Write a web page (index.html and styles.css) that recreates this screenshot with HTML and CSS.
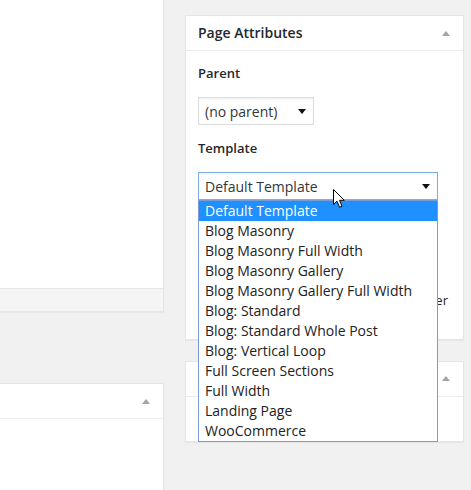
FILE: index.html
```html
<!DOCTYPE html>
<html lang="en">
<head>
    <meta charset="UTF-8">
    <title>Page Attributes</title>
    <link rel="stylesheet" href="styles.css">
</head>
<body>
    <div class="screen">
        <div class="col-main">
            <div class="box box-editor">
                <div class="editor-area"></div>
                <div class="status-bar"></div>
            </div>
            <div class="box box-lower">
                <div class="box-head"><span class="toggle"></span></div>
                <div class="box-body lower-body"></div>
            </div>
        </div>

        <div class="col-side">
            <div class="box">
                <div class="box-head">
                    <h2>Page Attributes</h2>
                    <span class="toggle"></span>
                </div>
                <div class="box-body attrs">
                    <p class="field-label first">Parent</p>
                    <div class="select select-parent">(no parent)<span class="caret"></span></div>

                    <p class="field-label">Template</p>
                    <div class="template-wrap">
                        <div class="select select-template">Default Template<span class="caret"></span></div>
                        <ul class="options">
                            <li class="selected">Default Template</li>
                            <li>Blog Masonry</li>
                            <li>Blog Masonry Full Width</li>
                            <li>Blog Masonry Gallery</li>
                            <li>Blog Masonry Gallery Full Width</li>
                            <li>Blog: Standard</li>
                            <li>Blog: Standard Whole Post</li>
                            <li>Blog: Vertical Loop</li>
                            <li>Full Screen Sections</li>
                            <li>Full Width</li>
                            <li>Landing Page</li>
                            <li>WooCommerce</li>
                        </ul>
                        <svg class="cursor" width="13" height="20" viewBox="0 0 13 20">
                            <path d="M0.5 0.5 L0.5 15.5 L4 12.2 L6.6 18.3 L9 17.3 L6.5 11.3 L11.3 11.3 Z" fill="#fff" stroke="#000" stroke-width="1" stroke-linejoin="miter"/>
                        </svg>
                    </div>

                    <p class="field-label">Order</p>
                    <input class="order-input" type="text" value="0">
                    <p class="help">Need help? Use the Help tab in the upper right of your screen.</p>
                </div>
            </div>

            <div class="box box-featured">
                <div class="box-head"><span class="toggle"></span></div>
                <div class="box-body featured-body">
                    <p>Set featured image</p>
                </div>
            </div>
        </div>
    </div>
</body>
</html>
```

FILE: styles.css
```css
body {
    margin: 0;
    height: 490px;
    overflow: hidden;
    background: #f1f1f1;
    font-family: "Open Sans", sans-serif;
    font-size: 13px;
    color: #23282d;
}
.screen {
    display: flex;
    gap: 21px;
}
.col-main {
    width: 164px;
}
.col-side {
    width: 279px;
    padding-top: 15px;
}
.box {
    background: #fff;
    border: 1px solid #e5e5e5;
    box-shadow: 0 1px 1px rgba(0,0,0,0.04);
}
.box-editor {
    border-top: 0;
    border-left: 0;
}
.editor-area {
    height: 288px;
}
.status-bar {
    height: 22px;
    background: #f5f5f5;
    border-top: 1px solid #e5e5e5;
}
.box-lower {
    margin-top: 71px;
    border-left: 0;
}
.lower-body {
    height: 120px;
}
.box-head {
    height: 34px;
    padding: 0 12px;
    display: flex;
    align-items: center;
    border-bottom: 1px solid #eee;
}
.box-head h2 {
    margin: 0;
    font-size: 14px;
    font-weight: 600;
    line-height: 1.4;
    color: #23282d;
}
.toggle {
    margin-left: auto;
    margin-right: 1px;
    width: 0;
    height: 0;
    border-left: 4px solid transparent;
    border-right: 4px solid transparent;
    border-bottom: 5px solid #a0a5aa;
}
.box-body {
    padding: 0 12px;
}
.attrs {
    padding-bottom: 9px;
}
.field-label {
    margin: 14px 0 15px;
    font-weight: 600;
    line-height: 18px;
}
.field-label.first {
    margin-top: 13px;
}
.select {
    box-sizing: border-box;
    height: 28px;
    padding: 0 7px 0 6px;
    display: flex;
    align-items: center;
    border: 1px solid #ddd;
    background: #fff;
    box-shadow: inset 0 1px 2px rgba(0,0,0,0.07);
    font-size: 14px;
    color: #32373c;
}
.select-parent {
    width: 116px;
}
.select-template {
    width: 240px;
    border-color: #7eaee3;
}
.caret {
    margin-left: auto;
    width: 0;
    height: 0;
    border-left: 4px solid transparent;
    border-right: 4px solid transparent;
    border-top: 5px solid #111;
}
.template-wrap {
    position: relative;
}
.options {
    position: absolute;
    top: 28px;
    left: 0;
    z-index: 5;
    box-sizing: border-box;
    width: 240px;
    margin: 0;
    padding: 0;
    list-style: none;
    background: #fff;
    border: 1px solid #7a9bd6;
}
.options li {
    height: 20px;
    line-height: 20px;
    padding: 0 6px;
    font-size: 14px;
    color: #222;
    white-space: nowrap;
}
.options li.selected {
    background: #1e90ff;
    color: #fff;
}
.cursor {
    position: absolute;
    left: 135px;
    top: 17px;
    z-index: 6;
}
.order-input {
    box-sizing: border-box;
    width: 46px;
    height: 28px;
    margin-top: -7px;
    border: 1px solid #ddd;
    font-family: inherit;
    font-size: 14px;
}
.help {
    margin: 20px 0 0;
    line-height: 20px;
}
.box-featured {
    margin-top: 21px;
}
.featured-body {
    height: 44px;
}
.featured-body p {
    margin: 0;
    padding-top: 14px;
    color: #555;
}
```
